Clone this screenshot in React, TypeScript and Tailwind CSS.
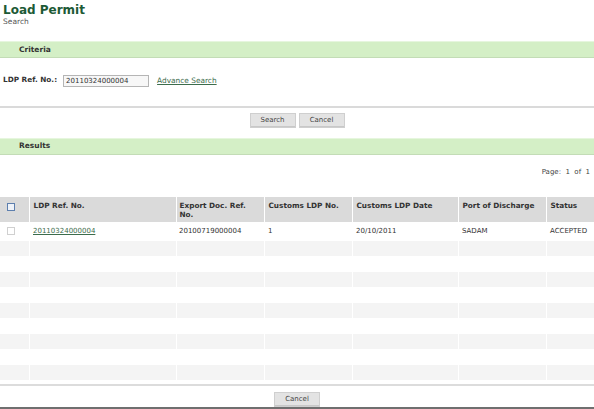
import React from 'react';

interface PermitRow {
  ldpRef: string;
  exportRef: string;
  customsNo: string;
  customsDate: string;
  port: string;
  status: string;
}

const rows: PermitRow[] = [
  {
    ldpRef: '20110324000004',
    exportRef: '20100719000004',
    customsNo: '1',
    customsDate: '20/10/2011',
    port: 'SADAM',
    status: 'ACCEPTED',
  },
];

const PAGE_SIZE = 10;

function Band({ title }: { title: string }) {
  return (
    <div className="h-[17px] bg-[#d4efc6] border-t border-[#e6f6de] border-b border-b-[#c3dcb6] pl-[19px] flex items-center text-[7.5px] font-bold text-[#333]">
      {title}
    </div>
  );
}

function Button({ label }: { label: string }) {
  return (
    <button className="h-[15px] w-[46px] bg-[#e3e3e3] border border-[#cfcfcf] text-[7px] text-[#444] leading-none shadow-[inset_0_-1px_0_#c8c8c8]">
      {label}
    </button>
  );
}

export default function App() {
  const empty = Array.from({ length: PAGE_SIZE - rows.length });

  return (
    <div className="w-[594px] h-[409px] bg-white overflow-hidden flex flex-col font-['DejaVu_Sans',Verdana,sans-serif]">
      {/* Page title */}
      <div className="pt-[4px] pl-[3px] h-[41px]">
        <h1 className="text-[12px] leading-[13px] font-bold text-[#1d5a36]">Load Permit</h1>
        <p className="text-[7.5px] leading-[9px] text-[#555]">Search</p>
      </div>

      <Band title="Criteria" />
      <div className="h-[48px] flex items-center pl-[3px] pb-[2px]">
        <span className="text-[7.3px] font-bold text-[#333]">LDP Ref. No.:</span>
        <input
          readOnly
          value="20110324000004"
          className="ml-[6px] w-[86px] h-[12px] border border-[#b5b5b5] bg-[#f7f7f7] px-[2px] text-[7px] text-[#333] outline-none"
        />
        <a href="#" className="ml-[8px] text-[7.4px] text-[#3c6c4c] underline">
          Advance Search
        </a>
      </div>
      <div className="h-[2px] bg-[#dadada]" />

      <div className="flex justify-center gap-[3px] pt-[5px] h-[30px]">
        <Button label="Search" />
        <Button label="Cancel" />
      </div>

      <Band title="Results" />
      <div className="h-[42px] flex justify-end items-start pr-[4px] pt-[13px] text-[7px] leading-[8px] text-[#444]">
        Page:&nbsp; 1 &nbsp;of&nbsp; 1
      </div>

      {/* Result grid */}
      <table className="w-full table-fixed border-collapse text-[7px] text-[#333]">
        <colgroup>
          <col className="w-[29px]" />
          <col className="w-[147px]" />
          <col className="w-[88px]" />
          <col className="w-[88px]" />
          <col className="w-[106px]" />
          <col className="w-[88px]" />
          <col />
        </colgroup>
        <thead>
          <tr className="h-[25px] bg-[#dadada] text-left align-top font-bold text-[7.3px] leading-[9px] text-[#333]">
            <th className="border-r border-white pt-[6px] pl-[7px]">
              <span className="block w-[8px] h-[8px] border border-[#5d7fae] bg-[#eef2f8]" />
            </th>
            <th className="border-r border-white pt-[4px] pl-[4px]">LDP Ref. No.</th>
            <th className="border-r border-white pt-[4px] pl-[3px] pr-[6px]">Export Doc. Ref. No.</th>
            <th className="border-r border-white pt-[4px] pl-[4px]">Customs LDP No.</th>
            <th className="border-r border-white pt-[4px] pl-[4px]">Customs LDP Date</th>
            <th className="border-r border-white pt-[4px] pl-[4px]">Port of Discharge</th>
            <th className="pt-[4px] pl-[4px]">Status</th>
          </tr>
        </thead>
        <tbody>
          {rows.map((r) => (
            <tr key={r.ldpRef} className="h-[19px] bg-white">
              <td className="pl-[7px]">
                <span className="block w-[8px] h-[8px] border border-[#d0d0d0] bg-white" />
              </td>
              <td className="pl-[4px]">
                <a href="#" className="text-[#3c6c4c] underline">
                  {r.ldpRef}
                </a>
              </td>
              <td className="pl-[3px]">{r.exportRef}</td>
              <td className="pl-[4px]">{r.customsNo}</td>
              <td className="pl-[4px]">{r.customsDate}</td>
              <td className="pl-[4px]">{r.port}</td>
              <td className="pl-[4px]">{r.status}</td>
            </tr>
          ))}
          {empty.map((_, i) => (
            <tr key={i} className={`h-[15.5px] ${i % 2 === 0 ? 'bg-[#f4f4f4]' : 'bg-white'}`}>
              <td className="border-r border-white" />
              <td className="border-r border-white" />
              <td className="border-r border-white" />
              <td className="border-r border-white" />
              <td className="border-r border-white" />
              <td className="border-r border-white" />
              <td />
            </tr>
          ))}
        </tbody>
      </table>

      <div className="mt-[4px] h-[2px] bg-[#dcdcdc]" />
      <div className="flex-1 flex justify-center items-start pt-[6px]">
        <Button label="Cancel" />
      </div>
      <div className="h-[2px] bg-[#6f6f6f]" />
    </div>
  );
}
